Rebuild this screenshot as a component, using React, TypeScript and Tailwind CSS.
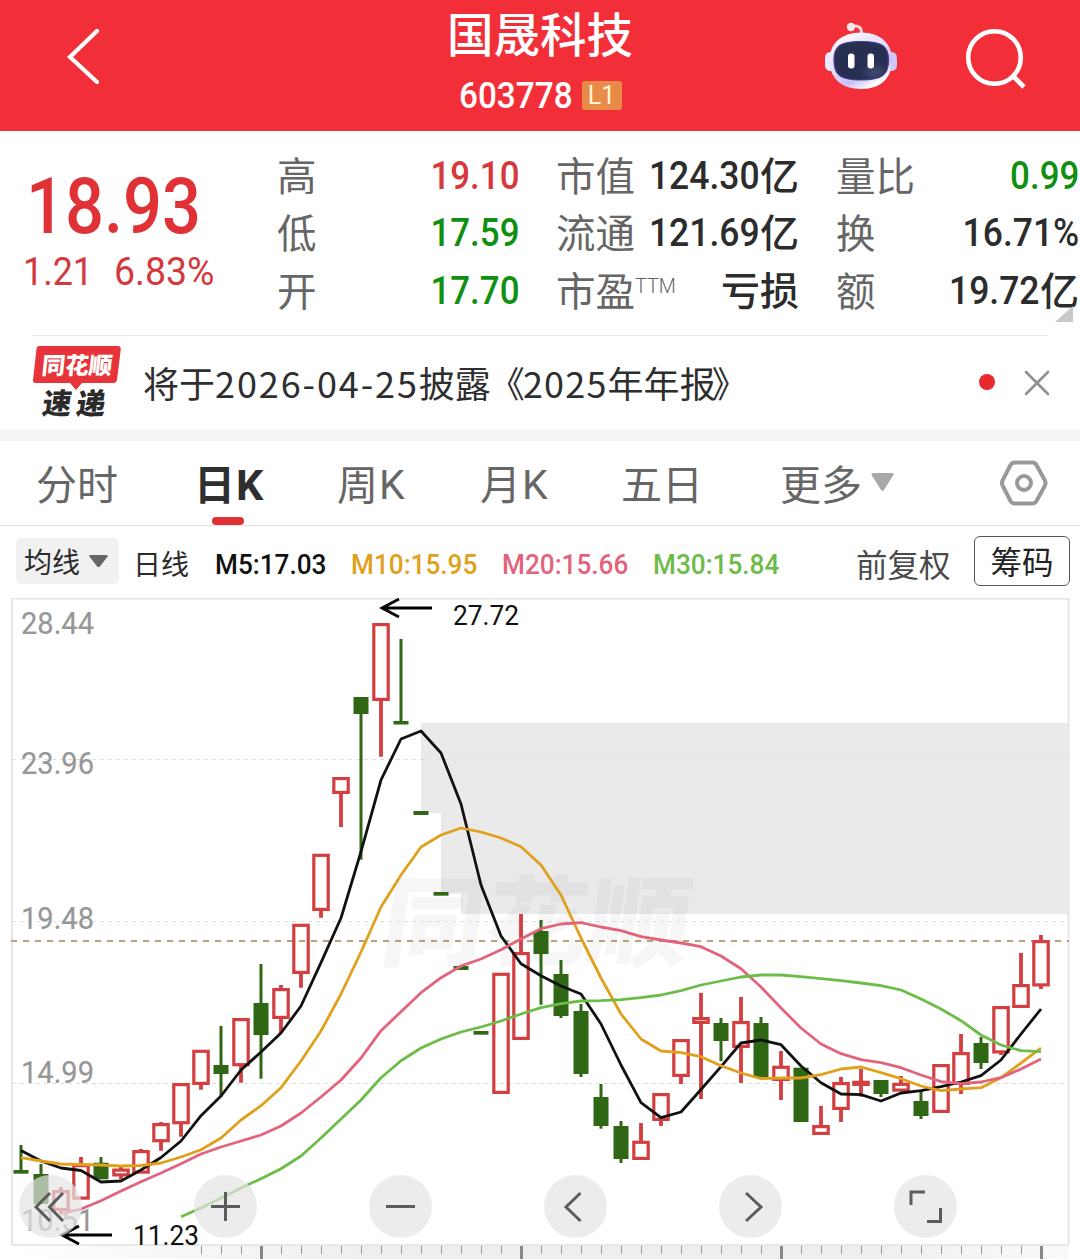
import type { ReactNode } from "react";

type Candle = [high: number, low: number, top: number, bottom: number, up: 0 | 1];

const CANDLES: Candle[] = [
  [1145, 1173, 1170, 1173.7, 0], [1164, 1204, 1174, 1204, 0], [1187, 1214, 1190, 1211, 1], [1157, 1199, 1164, 1199.7, 1],
  [1157, 1179, 1162.7, 1179.3, 0], [1167, 1179.5, 1168.5, 1176.5, 1], [1149, 1173, 1150, 1173.7, 1], [1122, 1150.7, 1123, 1142.3, 1],
  [1083, 1136.7, 1083, 1124.3, 1], [1050, 1089.7, 1049.7, 1085, 1], [1026, 1097, 1065, 1074, 0], [1018, 1082.7, 1018, 1066.3, 1],
  [964, 1078.7, 1003, 1035, 0], [985, 1033, 988, 1019, 1], [924, 987.7, 923.7, 974, 1], [854, 917.7, 853.7, 911, 1],
  [777, 827, 777, 794, 1], [697, 859.7, 697, 714, 0], [623, 756.7, 623, 701, 1], [639, 724, 721, 724.5, 0],
  [811, 815, 811, 815, 0], [892, 895, 892, 895.7, 0], [966, 970, 966, 970, 0], [1031, 1034, 1031, 1034.7, 0],
  [973, 1094, 972.7, 1094, 1], [914, 1040, 952, 1040, 1], [920, 1004.7, 931, 954, 0], [960, 1018, 974, 1016, 0],
  [1004, 1077, 1011, 1074, 0], [1084, 1128.7, 1097, 1126, 0], [1121, 1163, 1126, 1159, 0], [1123, 1160, 1140.7, 1160, 1],
  [1093, 1126, 1093, 1121, 1], [1039, 1084, 1039, 1077, 1], [993, 1099, 1017, 1024, 1], [1018, 1061, 1023, 1041, 0],
  [997, 1083, 1021, 1048, 1], [1017, 1077, 1023, 1077.5, 0], [1051, 1100, 1065.7, 1081, 1], [1068, 1122, 1067.7, 1122, 0],
  [1106, 1135, 1125, 1135, 1], [1077, 1122, 1082, 1110, 1], [1068.7, 1096.7, 1080.7, 1086, 1], [1080, 1097, 1080, 1094, 0],
  [1076, 1091, 1082.7, 1091.7, 1], [1091, 1119, 1101, 1116, 0], [1064, 1113, 1064, 1113, 1], [1034, 1094, 1052, 1085, 1],
  [1037, 1069, 1043, 1063, 0], [1006, 1055, 1006, 1053.5, 1], [953, 1008, 984, 1008, 1], [935, 989, 940, 986.5, 1],
];

const MA5 = [1150.5, 1161, 1168, 1170.5, 1182, 1181, 1170, 1157.5, 1141, 1115.7, 1096, 1070, 1052, 1033, 1006, 962.7, 918, 851.7, 780, 739, 731, 753, 804, 885, 936, 963.7, 975.7, 986, 994, 1024, 1065, 1102.7, 1117.7, 1112, 1089.5, 1066.7, 1043, 1040, 1044.7, 1066, 1082.7, 1094, 1094.7, 1101, 1093, 1090.7, 1086.7, 1082, 1075.7, 1060, 1034, 1009];
const MA10 = [1157.7, 1161, 1164, 1164.5, 1165, 1166, 1165.5, 1163, 1157, 1149.7, 1138, 1120, 1105.7, 1087.7, 1061, 1031, 994, 952, 907, 875, 847, 835, 828, 832, 838, 846.7, 865, 895, 938, 978, 1014, 1039, 1051, 1052.7, 1056.7, 1065.7, 1073, 1078.7, 1078, 1078, 1074.7, 1069, 1067, 1072.7, 1078.7, 1086, 1090.7, 1089, 1087.7, 1077.7, 1063, 1048];
const MA20 = [1214, 1209, 1200.7, 1191, 1181.7, 1173, 1163.7, 1154, 1147, 1141, 1135, 1126, 1113, 1097, 1080, 1058, 1030.7, 1011.7, 992.7, 977.7, 966, 959, 949.7, 939, 928.7, 924, 922.7, 927, 930.7, 936.7, 940, 943, 946.7, 956, 968.7, 987, 1008, 1028, 1044, 1053.7, 1059.7, 1062.7, 1067.7, 1075, 1081.7, 1083.7, 1082, 1077.7, 1069, 1059];
const MA30 = [1216.7, 1208, 1198, 1188, 1178.7, 1168.7, 1156, 1138, 1119, 1100, 1077.7, 1060.7, 1048, 1039, 1032, 1027, 1021, 1014, 1007.7, 1003.7, 1001, 1000.7, 999.7, 997.7, 995, 990.7, 985, 981, 977, 975, 975, 976.7, 978.7, 980.7, 983, 985.7, 990, 999, 1009, 1020.7, 1035, 1045, 1050.7, 1051.7];

const toPoints = (values: number[], start: number) =>
  values.map((v, i) => `${21 + (start + i) * 20},${v}`).join(" ");

const AXIS: [string, number][] = [["28.44", 634], ["23.96", 774], ["19.48", 929], ["14.99", 1083], ["10.51", 1231]];

const CJK = "font-['Noto_Sans_CJK_SC',sans-serif]";
const NUM = "font-[Roboto,'Noto_Sans_CJK_SC',sans-serif]";

function Header() {
  return (
    <header className="flex h-[131px] bg-[#f22f38] text-white">
      <div className="w-[360px] pl-[64px] pt-[25px]">
        <svg width="40" height="64" viewBox="0 0 40 64" fill="none" stroke="#fff" strokeWidth="4.2" strokeLinecap="round">
          <path d="M33 6 L6 32 L33 57" />
        </svg>
      </div>
      <div className="flex w-[360px] flex-col items-center">
        <div className="h-[65px] text-[46.5px] font-medium leading-[63px]">国晟科技</div>
        <div className="flex h-[61px] w-[163px] items-center">
          <div className={`w-[123px] pt-px ${NUM}`}>
            <span className="inline-block origin-left scale-x-[0.925] text-[36px] font-medium">603778</span>
          </div>
          <span className={`flex h-[29px] w-[40px] items-center justify-center rounded-[3px] bg-[#e88b49] pt-px text-[25px] text-[#fff3d8] ${NUM}`}>L1</span>
        </div>
      </div>
      <div className="flex w-[360px] pl-[103px] pt-[20px]">
        <svg width="76" height="74" viewBox="823 20 76 74" fill="none">
          <defs>
            <linearGradient id="shell" x1="0" y1="0" x2="0.6" y2="1">
              <stop offset="0" stopColor="#fff" />
              <stop offset="0.55" stopColor="#e2dcfa" />
              <stop offset="0.8" stopColor="#c9bff5" />
              <stop offset="1" stopColor="#fff" />
            </linearGradient>
            <radialGradient id="visor" cx="0.75" cy="0.8" r="0.8">
              <stop offset="0" stopColor="#434a70" />
              <stop offset="0.35" stopColor="#272e54" />
              <stop offset="1" stopColor="#26304f" />
            </radialGradient>
          </defs>
          <path d="M852 26.500 C859 24.500 862 28 861.500 35" stroke="#fbd8de" strokeWidth="3" />
          <circle cx="851" cy="27" r="4.200" fill="#fde9ee" />
          <rect x="825" y="52" width="12" height="19" rx="5.500" fill="#eee9fc" />
          <rect x="885" y="52" width="12" height="19" rx="5.500" fill="#cfc9f6" />
          <path d="M861 32.500 C881 32.500 892 44 892 60 C892 78 881 89 861 89 C841 89 829.500 78 829.500 60 C829.500 44 841 32.500 861 32.500Z" fill="url(#shell)" />
          <path d="M861 41.500 C882 41.500 888.500 46 888.500 60 C888.500 75 882 80 861 80 C840 80 834 75 834 60 C834 46 840 41.500 861 41.500Z" fill="url(#visor)" stroke="#4a3a96" strokeWidth="1.200" />
          <rect x="848" y="53.500" width="6.500" height="15" rx="3" fill="#fff" />
          <rect x="867.500" y="53.500" width="6.500" height="15" rx="3" fill="#fff" />
        </svg>
        <svg className="ml-[61px]" width="72" height="74" viewBox="960 20 72 74" fill="none" stroke="#fff" strokeWidth="4.6">
          <circle cx="994.500" cy="57.500" r="26.300" />
          <path d="M1013 76 L1024 87" />
        </svg>
      </div>
    </header>
  );
}

function Stat({ label, sup, value, color, width }: { label: string; sup?: string; value: string; color: string; width: string }) {
  return (
    <div className={`flex h-[57.5px] items-center justify-between whitespace-nowrap ${width}`}>
      <span className="flex text-[39.5px] leading-[57px] text-[#666]">
        <span className="-mt-[5px]">{label}</span>
        {sup && <span className={`origin-left scale-x-[0.94] text-[21px] font-light leading-[42px] ${NUM}`}>{sup}</span>}
      </span>
      <Value value={value} color={color} />
    </div>
  );
}

function Value({ value, color }: { value: string; color: string }) {
  const unit = value.endsWith("亿") ? "亿" : "";
  const digits = unit ? value.slice(0, -1) : value;
  return (
    <span className={`flex w-0 items-center justify-end font-medium ${color}`}>
      {digits === "亏损" ? (
        <span className="-mt-[5px] text-[39px] leading-[57px]">亏损</span>
      ) : (
        <span className={`mt-px origin-right text-[39px] leading-[57px] ${NUM} ${unit || value.endsWith("%") ? "scale-x-[0.91]" : "scale-x-[0.895]"}`}>{digits}</span>
      )}
      {unit && <span className="-mt-[5px] text-[39px] leading-[57px]">{unit}</span>}
    </span>
  );
}

function Quote() {
  return (
    <section className="relative flex h-[204px] pt-[16px]">
      <div className={`w-[277px] text-[#e03236] ${NUM}`}>
        <div className="mt-[14px] h-[90px] pl-[26px]">
          <span className="inline-block origin-left scale-x-[0.88] text-[78px] font-medium leading-[92px]">18.93</span>
        </div>
        <div className="flex h-[40px] pl-[23px] text-[39px] leading-[42px] text-[#d2383c]">
          <span className="w-[91px]"><span className="inline-block origin-left scale-x-[0.92]">1.21</span></span>
          <span className="inline-block origin-left scale-x-[0.96]">6.83%</span>
        </div>
      </div>
      <div className="mr-[37px]">
        <Stat width="w-[242px]" label="高" value="19.10" color="text-[#d7383c]" />
        <Stat width="w-[242px]" label="低" value="17.59" color="text-[#109010]" />
        <Stat width="w-[242px]" label="开" value="17.70" color="text-[#109010]" />
      </div>
      <div className="mr-[37px]">
        <Stat width="w-[243px]" label="市值" value="124.30亿" color="text-[#2c2c2c]" />
        <Stat width="w-[243px]" label="流通" value="121.69亿" color="text-[#2c2c2c]" />
        <Stat width="w-[243px]" label="市盈" sup="TTM" value="亏损" color="text-[#2c2c2c]" />
      </div>
      <div>
        <Stat width="w-[243px]" label="量比" value="0.99" color="text-[#109010]" />
        <Stat width="w-[243px]" label="换" value="16.71%" color="text-[#2c2c2c]" />
        <Stat width="w-[243px]" label="额" value="19.72亿" color="text-[#2c2c2c]" />
      </div>
      <svg className="absolute bottom-[13px] right-[7px]" width="18" height="16" viewBox="0 0 18 16"><path d="M18 0V16H0Z" fill="#c9c9c9" /></svg>
    </section>
  );
}

function Notice() {
  return (
    <section className="flex h-[95px] items-center pl-[32px]">
      <div className="relative flex h-[95px] w-[1016px] items-center border-t border-[#e8e8e8]">
        <div className="relative h-[80px] w-[90px] shrink-0">
          <svg className="absolute left-0 top-0" width="90" height="54" viewBox="32 343 90 54">
            <path d="M39 346 H118 Q121 346 120.700 350 L117 380 Q116.500 383 113 383 H82 L76 390 L70 383 H36 Q32.500 383 33 380 L36.500 349 Q37 346 39 346Z" fill="#e83338" />
          </svg>
          <div className="relative ml-[10px] mt-[6px] h-[30px] -skew-x-6 whitespace-nowrap text-[23.5px] font-black leading-[30px] text-white">同花顺</div>
          <div className="relative ml-[11px] mt-[6px] h-[32px] -skew-x-8 whitespace-nowrap text-[29px] font-black leading-[32px] tracking-[5px] text-[#2b2b2b]">速递</div>
        </div>
        <div className="-mt-[3px] ml-[21px] w-[836px] shrink-0 whitespace-nowrap text-[36px] leading-[52px] text-[#2e2e2e]">
          将于<span className="tracking-[1.9px]">2026-04-25</span>披<span className="tracking-[-2px]">露《</span>
          <span className="tracking-[1.2px]">2025</span>年年<span className="tracking-[-4px]">报》</span>
        </div>
        <div className="h-4 w-4 shrink-0 -translate-y-px rounded-full bg-[#e8292d]" />
        <svg className="ml-[29px] shrink-0" width="26" height="26" viewBox="0 0 26 26" stroke="#8f8f8f" strokeWidth="2.600" strokeLinecap="round"><path d="M2 2L24 24M24 2L2 24" /></svg>
      </div>
    </section>
  );
}

function Tab({ children, active, width }: { children: ReactNode; active?: boolean; width: string }) {
  return (
    <div className={`flex h-[84px] flex-col ${width} ${active ? "font-bold text-[#2f2f2f]" : "text-[#666]"}`}>
      <span className="flex h-[76px] items-center pt-[7px]">{children}</span>
      {active && <span className="ml-[18px] h-[8px] w-[32px] shrink-0 rounded-full bg-[#e03236]" />}
    </div>
  );
}

function Tabs() {
  return (
    <nav className="flex h-[96px] whitespace-nowrap border-b border-t-[11px] border-b-[#e3e3e3] border-t-[#f4f4f4] pl-[36px] text-[41px]">
      <Tab width="w-[158px]">分时</Tab>
      <Tab width="w-[143px]" active>日<span className={`ml-px mt-[5px] text-[43px] ${NUM}`}>K</span></Tab>
      <Tab width="w-[143px]">周<span className={`ml-px mt-[6px] ${NUM}`}>K</span></Tab>
      <Tab width="w-[141px]">月<span className={`ml-px mt-[6px] ${NUM}`}>K</span></Tab>
      <Tab width="w-[159px]">五日</Tab>
      <Tab width="w-[220px]">
        更多
        <svg className="ml-[9px]" width="23" height="19" viewBox="0 0 24 20"><path d="M2 0H22Q24.500 0.500 23 3L13.500 18Q12 20 10.500 18L1 3Q-0.500 0.500 2 0Z" fill="#a8a8a8" /></svg>
      </Tab>
      <svg className="-ml-px mt-[17px]" width="50" height="50" viewBox="0 0 50 50" fill="none" stroke="#999" strokeWidth="4">
        <path d="M15.500 4.500H33.500Q36 4.500 37.500 7L46 22.500Q47 25 46 27.500L37.500 43Q36 45.500 33.500 45.500H15.500Q13 45.500 11.500 43L3.500 27.500Q2.500 25 3.500 22.500L11.500 7Q13 4.500 15.500 4.500Z" />
        <circle cx="25" cy="25" r="7" />
      </svg>
    </nav>
  );
}

function Ma({ children, className }: { children: string; className: string }) {
  return (
    <span className={`shrink-0 whitespace-nowrap pl-[2px] pt-[5px] ${className} ${NUM}`}>
      <span className="inline-block origin-left scale-x-[0.935] text-[28px] font-medium">{children}</span>
    </span>
  );
}

function Toolbar() {
  return (
    <div className="flex h-[72px] items-center pl-[16px] pr-[10px] text-[28px] text-[#2b2b2b]">
      <div className="flex h-[46px] w-[103px] -translate-y-px items-center rounded-[6px] bg-[#f1f1f1] pl-[8px]">
        <span className="-mt-px">均线</span>
        <svg className="ml-[9px]" width="19" height="13" viewBox="0 0 19 13"><path d="M1 0H18L19 1L10.500 12H8.500L0 1Z" fill="#666" /></svg>
      </div>
      <span className="ml-[14px] w-[80px] pt-px">日线</span>
      <Ma className="w-[136px] text-[#111]">M5:17.03</Ma>
      <Ma className="w-[151px] text-[#dfa11e]">M10:15.95</Ma>
      <Ma className="w-[151px] text-[#e2647c]">M20:15.66</Ma>
      <Ma className="w-[205px] text-[#6dbb49]">M30:15.84</Ma>
      <span className="w-[118px] shrink-0 pt-[3px] text-[31.5px] text-[#4a4a4a]">前复权</span>
      <span className="flex h-[50px] w-[96px] shrink-0 -translate-y-px items-center justify-center rounded-[6px] border-[1.5px] border-[#555] text-[31.5px] text-[#222]">筹码</span>
    </div>
  );
}

const BUTTONS = ["M44 18 L30.500 32 L44 46 M31 18 L17 32 L31 46", "M17 31.500H46 M31.500 17V46", "M17 31.500H46", "M36.500 18 L22 32 L36.500 46", "M27 18 L42 32 L27 46", "M17 30V17H31 M46.500 33V46.500H33"];

function Chart() {
  return (
    <div className="relative h-[661px]">
      <svg className="block" width="1080" height="661" viewBox="0 598 1080 661" fill="none">
        <defs>
          <linearGradient id="strip" x1="0" x2="1" y1="0" y2="0">
            <stop offset="0" stopColor="#fff" />
            <stop offset="0.35" stopColor="#eee" />
            <stop offset="0.8" stopColor="#eee" />
            <stop offset="1" stopColor="#fafafa" />
          </linearGradient>
        </defs>
        <rect x="11" y="1245" width="1058" height="14" fill="url(#strip)" />
        <path d="M421 723H1069V914H461V894H441V813H421Z" fill="#eaeaea" />
        <text transform="translate(378 958) skewX(-8)" textLength="308" lengthAdjust="spacingAndGlyphs" fontSize="98" fontWeight="900" fill="#000" fillOpacity="0.035" className={CJK}>同花顺</text>
        <path d="M12 1245V598.500H1068.500V1245" stroke="#e6e6e6" strokeWidth="2" />
        <path d="M12 1245H1069" stroke="#e2e2e2" strokeWidth="1.500" />
        <path d="M12 759.500H1069M12 921.500H1069M12 1083.500H1069" stroke="#dedede" strokeDasharray="4 4" />
        <path d="M11 941H1069" stroke="#b5a277" strokeWidth="2" strokeDasharray="6 6" />
        {AXIS.map(([label, y]) => (
          <text key={label} x="21" y={y} textLength="73" lengthAdjust="spacingAndGlyphs" fontSize="32" fill="#979797" stroke="#979797" strokeWidth="0.200" className={NUM}>{label}</text>
        ))}
        {Array.from({ length: 43 }, (_, i) => {
          const major = (i - 3) % 13 === 0;
          return <path key={i} d={`M${201.500 + i * 20} 1246V${major ? 1259 : 1254}`} stroke={major ? "#888" : "#999"} strokeWidth={major ? 3 : 1} />;
        })}
        {CANDLES.map(([high, low, top, bottom, up], i) => {
          const x = 21 + i * 20;
          const height = bottom - top - 3.2;
          return up ? (
            <g key={i} stroke="#d33f40" strokeWidth="3.200">
              <path d={`M${x} ${high}V${top + 1}M${x} ${bottom - 1}V${low}`} strokeWidth="3.800" />
              <rect x={x - 7.200} y={top + 1.600} width="14.400" height={height} />
            </g>
          ) : (
            <g key={i} fill="#2f6714">
              <rect x={x - 1.500} y={high} width="3" height={low - high} />
              <rect x={x - 7.500} y={top} width="15" height={bottom - top} />
            </g>
          );
        })}
        <g strokeWidth="2.800" strokeLinejoin="round">
          <polyline points={toPoints(MA5, 0)} stroke="#111" />
          <polyline points={toPoints(MA10, 0)} stroke="#e0a01c" />
          <polyline points={toPoints(MA20, 2)} stroke="#e2647c" />
          <polyline points={toPoints(MA30, 8)} stroke="#6cbd48" />
        </g>
        <g stroke="#000" strokeWidth="2.800">
          <path d="M382 608H432M399 599L382 608L399 617" />
          <path d="M62 1235H112M79 1226L62 1235L79 1244" />
        </g>
        <g fill="#111" fontSize="27" className={NUM}>
          <text x="453" y="625" textLength="66" lengthAdjust="spacingAndGlyphs">27.72</text>
          <text x="133" y="1245" textLength="66" lengthAdjust="spacingAndGlyphs">11.23</text>
        </g>
      </svg>
      <div className="absolute left-[19px] top-[577px] flex gap-[112px]">
        {BUTTONS.map((d) => (
          <button key={d} className="h-[63px] w-[63px] rounded-full bg-[#e4e4e4]/70">
            <svg width="63" height="63" viewBox="0 0 63 63" fill="none" stroke="#5c5c5c" strokeWidth="3"><path d={d} /></svg>
          </button>
        ))}
      </div>
    </div>
  );
}

export default function App() {
  return (
    <main className={`h-[1259px] w-[1080px] overflow-hidden bg-white ${CJK}`}>
      <Header />
      <Quote />
      <Notice />
      <Tabs />
      <Toolbar />
      <Chart />
    </main>
  );
}
